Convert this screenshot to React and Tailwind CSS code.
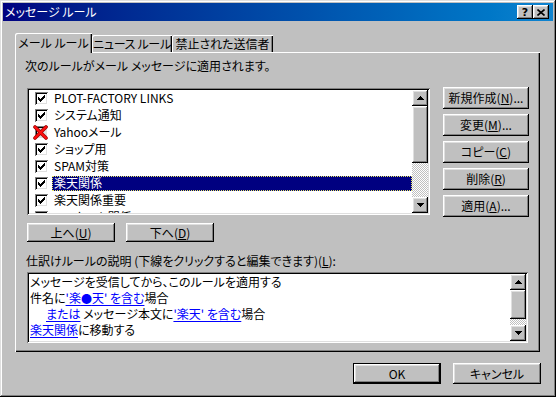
import React from 'react';

const raised =
  'shadow-[inset_-1px_-1px_#000,inset_1px_1px_#fff,inset_-2px_-2px_#808080,inset_2px_2px_#dfdfdf]';
const sunken =
  'shadow-[inset_1px_1px_#808080,inset_-1px_-1px_#fff,inset_2px_2px_#000,inset_-2px_-2px_#dfdfdf]';

function Btn({ children, className = '' }) {
  return (
    <div className={`flex items-center justify-center bg-[#c0c0c0] ${raised} ${className}`}>
      {children}
    </div>
  );
}

function Arrow({ down }) {
  return (
    <svg width="7" height="4" viewBox="0 0 7 4" shapeRendering="crispEdges">
      {down ? (
        <>
          <rect x="0" y="0" width="7" height="1" />
          <rect x="1" y="1" width="5" height="1" />
          <rect x="2" y="2" width="3" height="1" />
          <rect x="3" y="3" width="1" height="1" />
        </>
      ) : (
        <>
          <rect x="3" y="0" width="1" height="1" />
          <rect x="2" y="1" width="3" height="1" />
          <rect x="1" y="2" width="5" height="1" />
          <rect x="0" y="3" width="7" height="1" />
        </>
      )}
    </svg>
  );
}

function ScrollBar({ thumb }) {
  return (
    <div className="flex w-[16px] flex-col">
      <Btn className="h-[16px] shrink-0">
        <Arrow />
      </Btn>
      <div className={`bg-[#c0c0c0] shrink-0 ${raised} ${thumb}`} />
      <div className="flex-1 bg-[repeating-conic-gradient(#c0c0c0_0_25%,#fff_0_50%)] bg-[length:2px_2px]" />
      <Btn className="h-[16px] shrink-0">
        <Arrow down />
      </Btn>
    </div>
  );
}

function Check({ off }) {
  return (
    <div className="relative h-[13px] w-[13px] shrink-0">
      <div className={`h-full w-full ${off ? 'bg-[#dfdfdf]' : 'bg-white'} ${sunken}`}>
        {!off && (
          <svg width="13" height="13" viewBox="0 0 13 13" shapeRendering="crispEdges">
            <path d="M3 5 L5 7 L10 2 L10 5 L5 10 L3 8 Z" fill="#000" />
          </svg>
        )}
      </div>
      {off && (
        <svg className="absolute -left-[2px] -top-[1px]" width="15" height="15" viewBox="0 0 15 15">
          <path d="M2 2 L13 13 M13 2 L2 13" stroke="#a00000" strokeWidth="3.6" strokeLinecap="round" />
          <path d="M2 2 L13 13 M13 2 L2 13" stroke="#ff1010" strokeWidth="2" strokeLinecap="round" />
        </svg>
      )}
    </div>
  );
}

const rules = [
  { name: 'PLOT-FACTORY LINKS' },
  { name: 'システム通知' },
  { name: 'Yahooメール', off: true },
  { name: 'ショップ用' },
  { name: 'SPAM対策' },
  { name: '楽天関係', sel: true },
  { name: '楽天関係重要' },
  { name: 'アンケート関係' },
];

const sideButtons = [
  ['新規作成(', 'N', ')...'],
  ['変更(', 'M', ')...'],
  ['コピー(', 'C', ')'],
  ['削除(', 'R', ')'],
  ['適用(', 'A', ')...'],
];

function Link({ children }) {
  return <span className="text-[#0000ff] underline underline-offset-[2px]">{children}</span>;
}

export default function App() {
  return (
    <div className="h-[397px] w-[556px] overflow-hidden whitespace-nowrap bg-[#c0c0c0] font-['Noto_Sans_CJK_JP','Liberation_Sans',sans-serif] text-[12px] text-black [font-feature-settings:'palt']">
      <div className="flex h-full flex-col p-[3px] shadow-[inset_-1px_-1px_#000,inset_1px_1px_#dfdfdf,inset_-2px_-2px_#808080,inset_2px_2px_#fff]">
        {/* title bar */}
        <div className="flex h-[18px] shrink-0 items-center justify-between bg-gradient-to-r from-[#000080] to-[#1084d0] pl-[2px] pr-[4px]">
          <span className="text-[12px] leading-none text-white">メッセージ ルール</span>
          <div className="flex">
            <Btn className="h-[14px] w-[16px]">
              <span className="font-['DejaVu_Sans',sans-serif] text-[11px] font-bold leading-none">?</span>
            </Btn>
            <Btn className="h-[14px] w-[16px]">
              <svg width="8" height="7" viewBox="0 0 8 7">
                <path d="M0.5 0.5 L7.5 6.5 M7.5 0.5 L0.5 6.5" stroke="#000" strokeWidth="1.6" />
              </svg>
            </Btn>
          </div>
        </div>

        {/* body */}
        <div className="flex flex-1 flex-col pl-[12px] pr-[13px] pt-[12px]">
          {/* tabs */}
          <div className="flex h-[19px] items-end">
            <div className="relative z-10 mb-[-1px] flex h-[20px] w-[77px] items-center justify-center rounded-tl-[2px] bg-[#c0c0c0] pb-[1px] shadow-[inset_1px_1px_#fff,inset_-1px_0_#000,inset_-2px_0_#808080]">
              メール ルール
            </div>
            <div className="flex h-[17px] w-[80px] items-center justify-center rounded-tl-[2px] tracking-[-0.3px] shadow-[inset_1px_1px_#fff,inset_-1px_0_#000,inset_-2px_0_#808080]">
              ニュース&nbsp;ルール
            </div>
            <div className="flex h-[17px] w-[101px] items-center justify-center rounded-tl-[2px] shadow-[inset_1px_1px_#fff,inset_-1px_0_#000,inset_-2px_0_#808080]">
              禁止された送信者
            </div>
          </div>

          {/* panel */}
          <div className="flex h-[300px] w-[525px] flex-col pl-[10px] pt-[6px] shadow-[inset_1px_1px_#fff,inset_-1px_-1px_#000,inset_-2px_-2px_#808080]">
            <div className="h-[15px] leading-[15px]">次のルールがメール メッセージに適用されます。</div>

            <div className="mt-[15px] flex h-[127px] items-start">
              <div className={`ml-[2px] flex h-[127px] w-[403px] bg-white p-[2px] ${sunken}`}>
                <div className="flex-1 overflow-hidden">
                  {rules.map((r) => (
                    <div key={r.name} className="flex h-[17px] items-center pl-[6px]">
                      <Check off={r.off} />
                      <div
                        className={`ml-[4px] flex h-[15px] items-center px-[2px] pb-[1px] leading-none ${
                          r.sel
                            ? 'flex-1 bg-[#000080] text-white outline-1 outline-dotted outline-[#e8e860] -outline-offset-1'
                            : ''
                        }`}
                      >
                        {r.name}
                      </div>
                    </div>
                  ))}
                </div>
                <ScrollBar thumb="h-[57px]" />
              </div>

              <div className="ml-[13px] mt-[-1px] flex w-[86px] flex-col gap-[5px]">
                {sideButtons.map(([a, k, b]) => (
                  <Btn key={k} className="h-[22px]">
                    <span>
                      {a}
                      <u>{k}</u>
                      {b}
                    </span>
                  </Btn>
                ))}
              </div>
            </div>

            <div className="ml-[2px] mt-[8px] flex gap-[11px]">
              <Btn className="h-[19px] w-[88px]">
                <span className="leading-none">
                  上へ(<u>U</u>)
                </span>
              </Btn>
              <Btn className="h-[19px] w-[88px]">
                <span className="leading-none">
                  下へ(<u>D</u>)
                </span>
              </Btn>
            </div>

            <div className="ml-[1px] mt-[11px] h-[15px] leading-[15px]">
              仕訳けルールの説明 (下線をクリックすると編集できます)(<u>L</u>):
            </div>

            <div className={`ml-[2px] mt-[4px] flex h-[71px] w-[501px] bg-white p-[2px] ${sunken}`}>
              <div className="flex-1 overflow-hidden pl-[1px] leading-[16px]">
                <div>メッセージを受信してから、このルールを適用する</div>
                <div>
                  件名に<Link>'楽<span className="text-[11px]">●</span>天' を含む</Link>場合
                </div>
                <div className="pl-[16px]">
                  <Link>または</Link> メッセージ本文に<Link>'楽天' を含む</Link>場合
                </div>
                <div>
                  <Link>楽天関係</Link>に移動する
                </div>
              </div>
              <ScrollBar thumb="h-[29px]" />
            </div>
          </div>

          {/* dialog buttons */}
          <div className="mr-[-1px] mt-[11px] flex justify-end gap-[12px]">
            <div className="flex h-[21px] w-[88px] items-center justify-center bg-[#c0c0c0] shadow-[inset_0_0_0_1px_#000,inset_-2px_-2px_#000,inset_2px_2px_#fff,inset_-3px_-3px_#808080,inset_3px_3px_#dfdfdf]">
              OK
            </div>
            <Btn className="h-[21px] w-[88px]">キャンセル</Btn>
          </div>
        </div>
      </div>
    </div>
  );
}
